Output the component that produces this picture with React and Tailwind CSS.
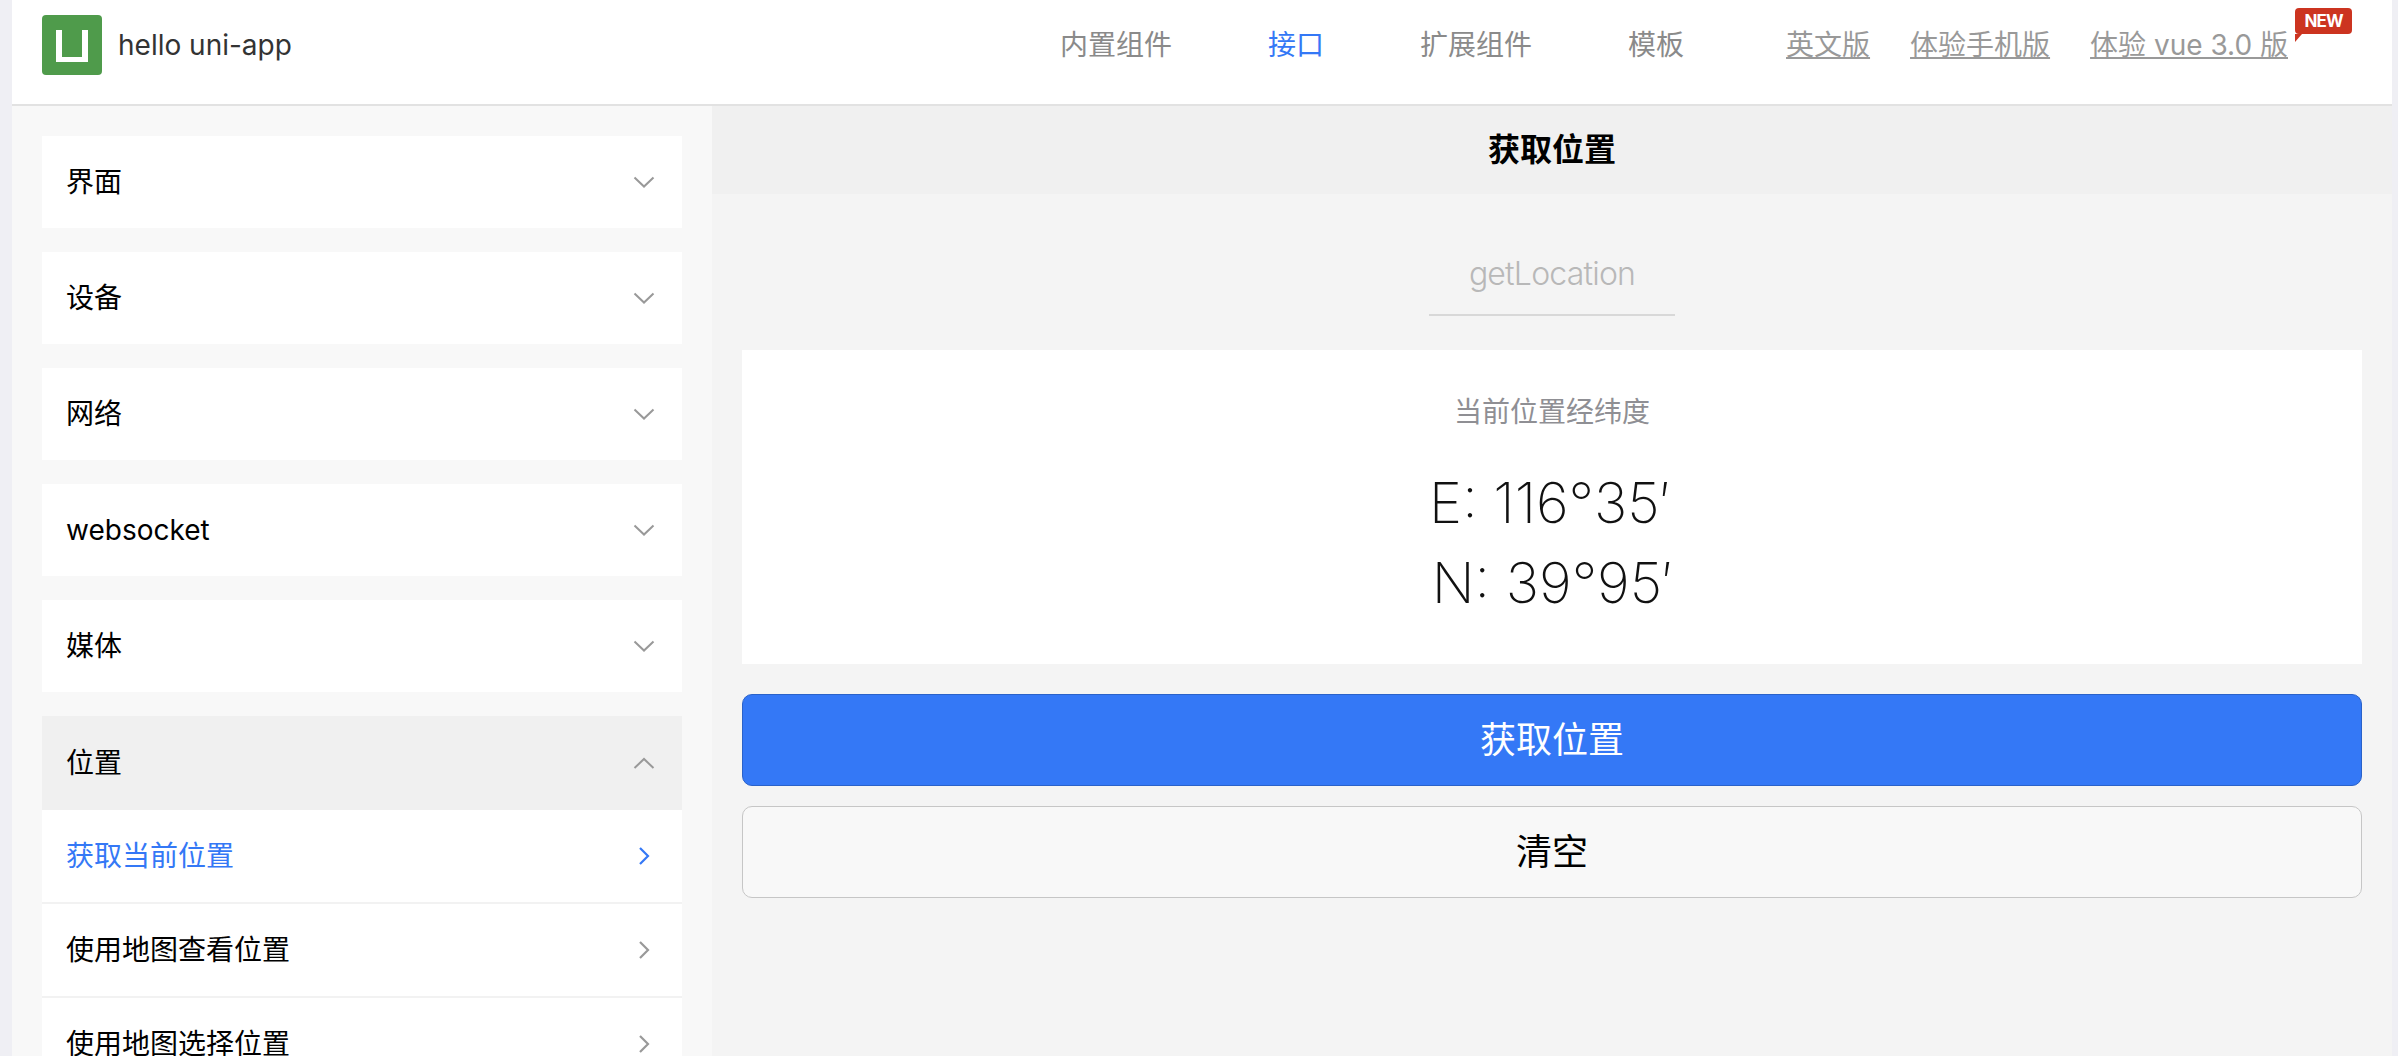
import React from 'react';

const FONT = 'font-["Inter","Noto_Sans_CJK_SC",sans-serif]';

const groups = ['界面', '设备', '网络', 'websocket', '媒体'];
const locationItems = ['获取当前位置', '使用地图查看位置', '使用地图选择位置'];

const Chevron = ({ dir, color = '#999' }) => {
  const paths = {
    down: 'M1.5 1.5 L11 10.5 L20.5 1.5',
    up: 'M1.5 11 L11 2 L20.5 11',
  };
  if (dir === 'right') {
    return (
      <svg width="12" height="20" viewBox="0 0 12 20" fill="none">
        <path d="M2 2 L10 10 L2 18" stroke={color} strokeWidth="2.2" />
      </svg>
    );
  }
  return (
    <svg width="22" height="13" viewBox="0 0 22 13" fill="none">
      <path d={paths[dir]} stroke={color} strokeWidth="2" />
    </svg>
  );
};

const Logo = () => (
  <svg width="60" height="60" viewBox="0 0 60 60">
    <rect width="60" height="60" rx="4" fill="#4f9b4b" />
    <path d="M14 15 H20 V42 H40 V15 H46 V47 H14 Z" fill="#fff" />
  </svg>
);

const Header = () => (
  <header className="flex h-[106px] shrink-0 items-center border-b-2 border-[#e2e2e2] bg-white pb-[14px] pl-[30px] pr-[104px]">
    <Logo />
    <span className="ml-[16px] text-[28px] text-[#333]">hello uni-app</span>
    <nav className="ml-auto flex items-center text-[28px] text-[#8a8a8a]">
      <span className="mr-[96px]">内置组件</span>
      <span className="mr-[96px] text-[#3478f6]">接口</span>
      <span className="mr-[96px]">扩展组件</span>
      <span>模板</span>
      <div className="ml-[102px] flex items-center gap-[40px] text-[#999] underline">
        <span>英文版</span>
        <span>体验手机版</span>
        <span className="relative whitespace-nowrap">
          体验 vue 3.0 版
          <span className="absolute left-[205px] top-[-16px] flex h-[26px] w-[57px] items-center justify-center rounded-[4px] bg-[#cc3420] text-[17px] font-bold leading-none tracking-tighter text-white no-underline">
            NEW
          </span>
          <span className="absolute left-[205px] top-[10px] h-0 w-0 border-r-[7px] border-t-[8px] border-r-transparent border-t-[#cc3420]" />
        </span>
      </div>
    </nav>
  </header>
);

const Sidebar = () => (
  <aside className="flex w-[700px] shrink-0 flex-col gap-[24px] bg-[#f8f8f8] px-[30px] pt-[30px] text-[28px] text-black">
    {groups.map((name) => (
      <div key={name} className="flex h-[92px] shrink-0 items-center justify-between bg-white pl-[24px] pr-[27px]">
        <span>{name}</span>
        <Chevron dir="down" />
      </div>
    ))}
    <div className="shrink-0">
      <div className="flex h-[94px] items-center justify-between bg-[#f0f0f0] pl-[24px] pr-[27px]">
        <span>位置</span>
        <Chevron dir="up" />
      </div>
      {locationItems.map((name, i) => (
        <div
          key={name}
          className={`flex h-[94px] items-center justify-between border-b-2 border-[#f2f2f2] bg-white pl-[24px] pr-[32px] ${i === 0 ? 'text-[#3478f6]' : ''}`}
        >
          <span>{name}</span>
          <Chevron dir="right" color={i === 0 ? '#3478f6' : '#999'} />
        </div>
      ))}
    </div>
  </aside>
);

const Content = () => (
  <main className="flex min-w-0 flex-1 flex-col bg-[#f4f4f4]">
    <div className="flex h-[88px] shrink-0 items-center justify-center bg-[#f0f0f0] text-[32px] font-bold text-black">
      获取位置
    </div>
    <div className="flex flex-col items-center pt-[60px]">
      <div className="h-[62px] w-[246px] border-b-2 border-[#d8d8d8] text-center text-[32px] font-light leading-[40px] tracking-[-0.8px] text-[#b8b8b8]">
        getLocation
      </div>
    </div>
    <div className="mx-[30px] mt-[34px] flex h-[314px] flex-col items-center bg-white pt-[42px]">
      <div className="text-[28px] leading-[40px] text-[#8f8f94]">当前位置经纬度</div>
      <div className="mt-[31px] text-center text-[56px] font-extralight leading-[80px] text-[#111]">
        <div className="pr-[5px]">E: 116°35′</div>
        <div>N: 39°95′</div>
      </div>
    </div>
    <button className={`mx-[30px] mt-[30px] h-[92px] rounded-[10px] border border-[#2a62c9] bg-[#3478f6] text-[36px] text-white ${FONT}`}>
      获取位置
    </button>
    <button className={`mx-[30px] mt-[20px] h-[92px] rounded-[10px] border border-[#c6c6c6] bg-[#f8f8f8] text-[36px] text-black ${FONT}`}>
      清空
    </button>
  </main>
);

export default function App() {
  return (
    <div className={`h-[1056px] w-full overflow-hidden bg-[#efeff4] pl-[12px] pr-[6px] ${FONT}`}>
      <div className="flex h-full flex-col">
        <Header />
        <div className="flex min-h-0 flex-1">
          <Sidebar />
          <Content />
        </div>
      </div>
    </div>
  );
}
